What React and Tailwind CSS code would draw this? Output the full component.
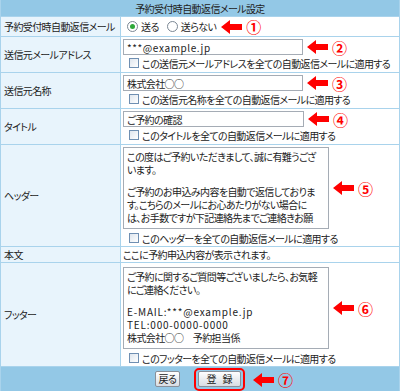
import React from "react";

const Arrow = ({ n }) => (
  <span className="flex items-center gap-[4px]">
    <svg width="21" height="14" viewBox="0 0 21 14">
      <polygon points="0,7 9,0 9,4 21,4 21,10 9,10 9,14" fill="#ff0000" />
    </svg>
    <span className="text-[15px] font-bold leading-none tracking-normal text-[#ff0000]">{n}</span>
  </span>
);

const Check = ({ text }) => (
  <div className="flex items-center h-[12px] pl-[6px] gap-[3px]">
    <span className="w-[10px] h-[10px] shrink-0 border border-[#6f8fb2] bg-gradient-to-br from-[#dfe6ee] to-white" />
    <span className="whitespace-nowrap">{text}</span>
  </div>
);

const Radio = ({ on, text }) => (
  <span className="flex items-center gap-[3px]">
    <span className="w-[11px] h-[11px] rounded-full border border-[#7b8794] bg-white flex items-center justify-center">
      {on && <span className="w-[5px] h-[5px] rounded-full bg-[#2fa83a]" />}
    </span>
    <span>{text}</span>
  </span>
);

const Row = ({ label, h, children }) => (
  <div className={`flex border-b border-[#a9d3ec] ${h}`}>
    <div className="w-[120px] shrink-0 flex items-center pl-[3px] bg-[#e8f4fc] border-r border-[#a9d3ec] whitespace-nowrap">
      {label}
    </div>
    <div className="flex-1 bg-white pl-[2px]">{children}</div>
  </div>
);

const Box = ({ lines }) => (
  <div className="w-[206px] h-[82px] shrink-0 border border-[#a5acb5] overflow-hidden px-[3px] pt-[2px] text-[10px] leading-[13px]">
    {lines.map((l, i) =>
      l === "" ? (
        <div key={i} className="h-[9px]" />
      ) : /^[A-Z]/.test(l) ? (
        <div key={i} className="whitespace-nowrap tracking-[0.8px]">{l}</div>
      ) : (
        <div key={i} className="whitespace-nowrap tracking-[-0.6px]">{l}</div>
      )
    )}
  </div>
);

const Input = ({ value, w }) => (
  <div className={`h-[16px] shrink-0 border border-[#a5acb5] flex items-center px-[3px] ${w}`}>{value}</div>
);

export default function App() {
  return (
    <div className="w-[400px] h-[391px] bg-white text-[#222] text-[10px] tracking-[-0.6px] font-['Noto_Sans_CJK_JP',sans-serif] [font-feature-settings:'palt'] border-x border-[#a9d3ec]">
      <div className="h-[17px] bg-[#93c8e6] border-b border-[#a9d3ec] flex items-center justify-center">
        予約受付時自動返信メール設定
      </div>

      <Row label="予約受付時自動返信メール" h="h-[20px]">
        <div className="flex items-center h-full pl-[4px]">
          <Radio on text="送る" />
          <span className="ml-[8px]"><Radio text="送らない" /></span>
          <span className="ml-[5px]"><Arrow n="①" /></span>
        </div>
      </Row>

      <Row label="送信元メールアドレス" h="h-[36px]">
        <div className="pt-[2px]">
          <div className="flex items-center gap-[4px]">
            <Input value={<span className="tracking-[0.6px]">***@example.jp</span>} w="w-[180px]" />
            <Arrow n="②" />
          </div>
          <div className="mt-[2px]">
            <Check text="この送信元メールアドレスを全ての自動返信メールに適用する" />
          </div>
        </div>
      </Row>

      <Row label="送信元名称" h="h-[36px]">
        <div className="pt-[2px]">
          <div className="flex items-center gap-[4px]">
            <Input value="株式会社○○" w="w-[180px]" />
            <Arrow n="③" />
          </div>
          <div className="mt-[2px]">
            <Check text="この送信元名称を全ての自動返信メールに適用する" />
          </div>
        </div>
      </Row>

      <Row label="タイトル" h="h-[36px]">
        <div className="pt-[2px]">
          <div className="flex items-center gap-[4px]">
            <Input value="ご予約の確認" w="w-[181px]" />
            <Arrow n="④" />
          </div>
          <div className="mt-[2px]">
            <Check text="このタイトルを全ての自動返信メールに適用する" />
          </div>
        </div>
      </Row>

      <Row label="ヘッダー" h="h-[102px]">
        <div className="pt-[2px]">
          <div className="flex items-center gap-[4px]">
            <Box
              lines={[
                "この度はご予約いただきまして、誠に有難うござ",
                "います。",
                "",
                "ご予約のお申込み内容を自動で返信しておりま",
                "す。こちらのメールにお心あたりがない場合に",
                "は、お手数ですが下記連絡先までご連絡きお願",
              ]}
            />
            <Arrow n="⑤" />
          </div>
          <div className="mt-[3px]">
            <Check text="このヘッダーを全ての自動返信メールに適用する" />
          </div>
        </div>
      </Row>

      <Row label="本文" h="h-[16px]">
        <div className="flex items-center h-full">ここに予約申込内容が表示されます。</div>
      </Row>

      <Row label="フッター" h="h-[104px]">
        <div className="pt-[4px]">
          <div className="flex items-center gap-[4px]">
            <Box
              lines={[
                "ご予約に関するご質問等ございましたら、お気軽",
                "にご連絡ください。",
                "",
                "E-MAIL:***@example.jp",
                "TEL:000-0000-0000",
                "株式会社○○　予約担当係",
              ]}
            />
            <Arrow n="⑥" />
          </div>
          <div className="mt-[3px]">
            <Check text="このフッターを全ての自動返信メールに適用する" />
          </div>
        </div>
      </Row>

      <div className="relative h-[24px] bg-[#93c8e6] flex items-center justify-center">
        <button className="h-[16px] w-[25px] border border-[#8a9099] rounded-[2px] bg-gradient-to-b from-white to-[#d8dde3] text-[10px] leading-none">
          戻る
        </button>
        <div className="ml-[14px] w-[51px] h-[23px] border-2 border-[#ff0000] rounded-[5px] flex items-center justify-center">
          <button className="h-[16px] w-[43px] border border-[#8a9099] rounded-[2px] bg-gradient-to-b from-white to-[#d8dde3] text-[10px] leading-none tracking-[6px] pl-[6px]">
            登録
          </button>
        </div>
        <div className="absolute left-[252px] top-[5px]">
          <Arrow n="⑦" />
        </div>
      </div>
    </div>
  );
}
